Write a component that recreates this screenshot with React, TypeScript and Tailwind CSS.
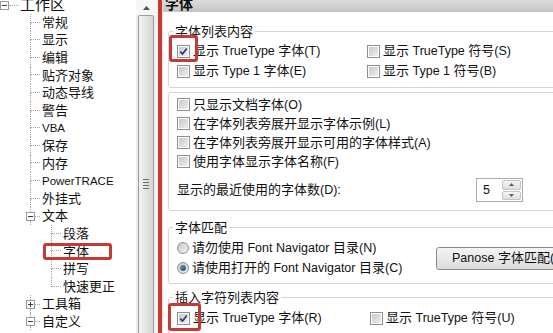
import React from "react";

type TreeRow = {
  label: string;
  level: 0 | 1 | 2;
  exp?: "minus" | "plus";
  last?: boolean;
  boxed?: boolean;
};

const rows: TreeRow[] = [
  { label: "工作区", level: 0, exp: "minus" },
  { label: "常规", level: 1 },
  { label: "显示", level: 1 },
  { label: "编辑", level: 1 },
  { label: "贴齐对象", level: 1 },
  { label: "动态导线", level: 1 },
  { label: "警告", level: 1 },
  { label: "VBA", level: 1 },
  { label: "保存", level: 1 },
  { label: "内存", level: 1 },
  { label: "PowerTRACE", level: 1 },
  { label: "外挂式", level: 1 },
  { label: "文本", level: 1, exp: "minus" },
  { label: "段落", level: 2 },
  { label: "字体", level: 2, boxed: true },
  { label: "拼写", level: 2 },
  { label: "快速更正", level: 2, last: true },
  { label: "工具箱", level: 1, exp: "plus" },
  { label: "自定义", level: 1, exp: "minus" },
];

const dot = "border-dotted border-[#a3a3a3]";

// latin runs are set a bit smaller, like the dialog's Tahoma next to the CJK glyphs
function Mixed({ text, small }: { text: string; small: string }) {
  const parts = text.split(/([\x20-\x7e]+)/).filter(Boolean);
  return (
    <>
      {parts.map((p, i) =>
        /^[\x20-\x7e]+$/.test(p) ? (
          <span key={i} className={small}>
            {p}
          </span>
        ) : (
          <span key={i}>{p}</span>
        )
      )}
    </>
  );
}

function ExpBox({ kind }: { kind: "minus" | "plus" }) {
  return (
    <div className="flex h-[9px] w-[9px] shrink-0 items-center justify-center border border-[#9a9a9a] bg-white">
      <svg width="5" height="5" viewBox="0 0 5 5">
        <path d="M0 2.5H5" stroke="#3d3d3d" strokeWidth="1" />
        {kind === "plus" && <path d="M2.5 0V5" stroke="#3d3d3d" strokeWidth="1" />}
      </svg>
    </div>
  );
}

function Connector({ last }: { last?: boolean }) {
  return (
    <div className="flex h-full w-[10px] shrink-0 flex-col">
      <div className={`h-1/2 border-b border-l ${dot}`} />
      <div className={`h-1/2 ${last ? "" : `border-l ${dot}`}`} />
    </div>
  );
}

function TreeLabel({ text }: { text: string }) {
  return (
    <span className="ml-[2px] whitespace-nowrap leading-[17.6px]">
      <Mixed text={text} small="text-[11.5px]" />
    </span>
  );
}

function Tree() {
  return (
    <div className="mt-[-3.8px] flex flex-col">
      {rows.map((r) => (
        <div key={r.label} className="relative flex h-[17.6px] items-center">
          {r.level === 0 && (
            <>
              <ExpBox kind="minus" />
              <div className={`w-[10px] border-t ${dot}`} />
              <span className="ml-[1px] text-[15px] leading-[17.6px]">{r.label}</span>
            </>
          )}
          {r.level === 1 && !r.exp && (
            <>
              <div className="w-[30px] shrink-0" />
              <Connector />
              <TreeLabel text={r.label} />
            </>
          )}
          {r.level === 1 && r.exp && (
            <>
              <div className="w-[26px] shrink-0" />
              <div className="flex h-full w-[9px] shrink-0 flex-col items-center">
                <div className={`flex-1 border-l ${dot}`} />
                <ExpBox kind={r.exp} />
                <div className={`flex-1 border-l ${dot}`} />
              </div>
              <div className={`w-[5px] border-t ${dot}`} />
              <TreeLabel text={r.label} />
            </>
          )}
          {r.level === 2 && (
            <>
              <div className="w-[51px] shrink-0" />
              <Connector last={r.last} />
              <TreeLabel text={r.label} />
            </>
          )}
          {r.boxed && (
            <div className="absolute left-[43px] top-0 h-full w-[69px] rounded-[3px] border-[3px] border-[#c63a35]" />
          )}
        </div>
      ))}
    </div>
  );
}

function Scrollbar() {
  return (
    <div className="flex h-full w-[20px] shrink-0 flex-col bg-[#eeeeee]">
      <div className="flex h-[15px] shrink-0 items-center justify-center bg-[#f7f7f7]">
        <svg width="7" height="4" viewBox="0 0 7 4">
          <path d="M0 4L3.5 0L7 4Z" fill="#505050" />
        </svg>
      </div>
      <div className="mx-[2px] flex h-[338px] shrink-0 items-center justify-center rounded-[2px] border border-[#9c9c9c] bg-gradient-to-r from-[#f4f4f4] to-[#d4d4d4]">
        <div className="flex flex-col gap-[2px]">
          <div className="h-px w-[6px] bg-[#707070]" />
          <div className="h-px w-[6px] bg-[#707070]" />
          <div className="h-px w-[6px] bg-[#707070]" />
          <div className="h-px w-[6px] bg-[#707070]" />
        </div>
      </div>
    </div>
  );
}

function Check({ checked, boxed }: { checked?: boolean; boxed?: "top" | "bottom" }) {
  return (
    <span className="relative shrink-0">
      <span className="flex h-[13px] w-[13px] items-center justify-center border border-[#8e8f8f] bg-white p-px">
        <span
          className={`flex h-full w-full items-center justify-center bg-gradient-to-br ${
            checked ? "from-[#c6ccd6] to-[#eef1f5]" : "from-[#c9c9c9] to-[#eeeeee]"
          }`}
        >
          {checked && (
            <svg width="9" height="9" viewBox="0 0 9 9">
              <path d="M1.2 4.6L3.5 7L7.8 1.5" fill="none" stroke="#283c6a" strokeWidth="1.7" />
            </svg>
          )}
        </span>
      </span>
      {boxed === "top" && (
        <span className="absolute left-[-8px] top-[-9.5px] h-[27px] w-[29px] rounded-[3px] border-[3px] border-[#c63a35]" />
      )}
      {boxed === "bottom" && (
        <span className="absolute left-[-9px] top-[-8.5px] h-[28px] w-[33px] rounded-[3px] border-[3px] border-[#c63a35]" />
      )}
    </span>
  );
}

function CheckItem({ label, checked, boxed, h = "h-[20px]" }: { label: string; checked?: boolean; boxed?: "top" | "bottom"; h?: string }) {
  return (
    <div className={`flex items-center gap-[3px] ${h}`}>
      <Check checked={checked} boxed={boxed} />
      <span className="whitespace-nowrap leading-[17px]">
        <Mixed text={label} small="text-[12.5px]" />
      </span>
    </div>
  );
}

function Radio({ label, selected }: { label: string; selected?: boolean }) {
  return (
    <div className="flex h-[20px] items-center gap-[3px]">
      <span className="flex h-[12px] w-[12px] shrink-0 items-center justify-center rounded-full border border-[#8e8f8f] bg-gradient-to-br from-[#c8c8c8] to-[#f2f2f2]">
        {selected && <span className="h-[6px] w-[6px] rounded-full bg-gradient-to-br from-[#6d9bbd] to-[#1f4d73]" />}
      </span>
      <span className="whitespace-nowrap leading-[17px]">
        <Mixed text={label} small="text-[12.5px]" />
      </span>
    </div>
  );
}

const groupBox = "ml-[5px] w-[420px] shrink-0 rounded-[3px] border border-[#d3d6d9]";
const legend = "ml-[4px] px-[2px] leading-[17px]";

export default function App() {
  return (
    <div className="flex h-[333px] w-[553px] overflow-hidden bg-white font-['Liberation_Sans','Noto_Sans_CJK_SC',sans-serif] text-[13px] text-[#111]">
      <div className="h-full w-[136px] shrink-0 overflow-hidden">
        <Tree />
      </div>
      <Scrollbar />
      <div className="h-full w-[2px] shrink-0 bg-[#f2f2f2]" />
      <div className="h-full w-[4px] shrink-0 bg-[#c63a35]" />
      <div className="flex h-full flex-1 flex-col overflow-hidden border-l border-[#f3dcdc]">
        <div className="h-[12px] shrink-0 overflow-hidden bg-gradient-to-b from-[#dcdcdc] to-[#c4c4c4] pl-[2px]">
          <div className="mt-[-4px] text-[14px] font-bold leading-[17px]">字体</div>
        </div>

        <fieldset className={`${groupBox} mt-[10.5px]`}>
          <legend className={legend}>字体列表内容</legend>
          <div className="grid grid-cols-[190px_1fr] pb-[6px] pl-[8px] pt-[1.5px]">
            <CheckItem label="显示 TrueType 字体(T)" checked boxed="top" />
            <CheckItem label="显示 TrueType 符号(S)" />
            <CheckItem label="显示 Type 1 字体(E)" />
            <CheckItem label="显示 Type 1 符号(B)" />
          </div>
        </fieldset>

        <fieldset className={`${groupBox} mt-[4px]`}>
          <div className="flex flex-col pb-[8px] pl-[8px] pt-[2px]">
            <CheckItem label="只显示文档字体(O)" h="h-[19px]" />
            <CheckItem label="在字体列表旁展开显示字体示例(L)" h="h-[19px]" />
            <CheckItem label="在字体列表旁展开显示可用的字体样式(A)" h="h-[19px]" />
            <CheckItem label="使用字体显示字体名称(F)" h="h-[19px]" />
            <div className="mt-[7px] flex h-[24px] items-center">
              <span className="w-[299px] shrink-0 leading-[17px]">
                <Mixed text="显示的最近使用的字体数(D):" small="text-[12.5px]" />
              </span>
              <div className="flex h-[24px] w-[47px] items-center border border-[#abadb3] bg-white pl-[6px] pr-[1px]">
                <span className="flex-1 text-[12.5px] leading-[17px]">5</span>
                <div className="flex h-full w-[19px] flex-col gap-px py-px">
                  <div className="flex flex-1 items-center justify-center rounded-[2px] border border-[#c2c4c8] bg-gradient-to-b from-[#f6f6f6] to-[#dedede]">
                    <svg width="5" height="3" viewBox="0 0 5 3">
                      <path d="M0 3L2.5 0L5 3Z" fill="#4d6185" />
                    </svg>
                  </div>
                  <div className="flex flex-1 items-center justify-center rounded-[2px] border border-[#c2c4c8] bg-gradient-to-b from-[#f6f6f6] to-[#dedede]">
                    <svg width="5" height="3" viewBox="0 0 5 3">
                      <path d="M0 0L2.5 3L5 0Z" fill="#4d6185" />
                    </svg>
                  </div>
                </div>
              </div>
            </div>
          </div>
        </fieldset>

        <fieldset className={`${groupBox} mt-[7.5px]`}>
          <legend className={legend}>字体匹配</legend>
          <div className="flex items-center pb-[5px] pl-[8px] pt-[2.5px]">
            <div className="flex w-[259px] shrink-0 flex-col">
              <Radio label="请勿使用 Font Navigator 目录(N)" />
              <Radio label="请使用打开的 Font Navigator 目录(C)" selected />
            </div>
            <button className="flex h-[23px] w-[150px] shrink-0 items-center rounded-[3px] border border-[#8a8a8a] bg-gradient-to-b from-[#f4f4f4] to-[#dcdcdc] pl-[15px]">
              <span className="whitespace-nowrap leading-[17px]">
                <Mixed text="Panose 字体匹配(P)" small="text-[12.5px]" />
              </span>
            </button>
          </div>
        </fieldset>

        <fieldset className={`${groupBox} mt-[4.5px]`}>
          <legend className={legend}>插入字符列表内容</legend>
          <div className="grid grid-cols-[193px_1fr] pb-[6px] pl-[8px] pt-[2.5px]">
            <CheckItem label="显示 TrueType 字体(R)" checked boxed="bottom" />
            <CheckItem label="显示 TrueType 符号(U)" />
          </div>
        </fieldset>
      </div>
    </div>
  );
}
